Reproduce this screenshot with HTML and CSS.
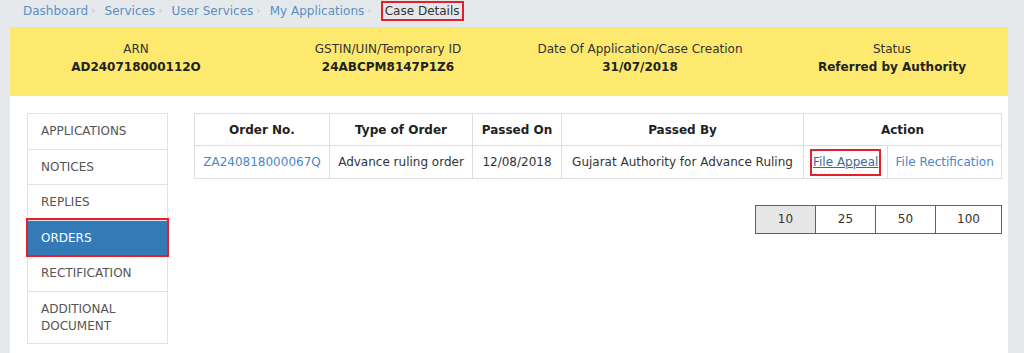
FILE: index.html
```html
<!DOCTYPE html>
<html lang="en">
<head>
  <meta charset="UTF-8" />
  <meta name="viewport" content="width=device-width, initial-scale=1.0" />
  <title>Case Details</title>
  <link rel="stylesheet" href="styles.css">
</head>
<body>
  <div class="page">
    <div class="crumbs">
      <a href="#">Dashboard</a><span class="sep">›</span>
      <a href="#">Services</a><span class="sep">›</span>
      <a href="#">User Services</a><span class="sep">›</span>
      <a href="#">My Applications</a><span class="sep">›</span>
      <span class="current">Case Details</span>
    </div>

    <div class="summary">
      <div class="field">
        <div class="label">ARN</div>
        <div class="value">AD240718000112O</div>
      </div>
      <div class="field">
        <div class="label">GSTIN/UIN/Temporary ID</div>
        <div class="value">24ABCPM8147P1Z6</div>
      </div>
      <div class="field">
        <div class="label">Date Of Application/Case Creation</div>
        <div class="value">31/07/2018</div>
      </div>
      <div class="field">
        <div class="label">Status</div>
        <div class="value">Referred by Authority</div>
      </div>
    </div>

    <div class="content">
      <ul class="side-nav">
        <li>APPLICATIONS</li>
        <li>NOTICES</li>
        <li>REPLIES</li>
        <li class="active">ORDERS</li>
        <li>RECTIFICATION</li>
        <li>ADDITIONAL DOCUMENT</li>
      </ul>

      <div class="main">
        <table class="orders">
          <thead>
            <tr>
              <th class="c-no">Order No.</th>
              <th class="c-type">Type of Order</th>
              <th class="c-date">Passed On</th>
              <th class="c-by">Passed By</th>
              <th colspan="2">Action</th>
            </tr>
          </thead>
          <tbody>
            <tr>
              <td><a href="#">ZA240818000067Q</a></td>
              <td>Advance ruling order</td>
              <td>12/08/2018</td>
              <td>Gujarat Authority for Advance Ruling</td>
              <td class="c-appeal"><a href="#" class="appeal">File Appeal</a></td>
              <td class="c-rect"><a href="#">File Rectification</a></td>
            </tr>
          </tbody>
        </table>

        <div class="pager">
          <span class="active">10</span>
          <span>25</span>
          <span>50</span>
          <span class="wide">100</span>
        </div>
      </div>
    </div>
  </div>
</body>
</html>
```

FILE: styles.css
```css
:root {
  --bg: #e6e9ec;
  --yellow: #fde96e;
  --link: #4a88c6;
  --line: #dddddd;
  --mark: #e3202c;
  --text: #333;
}

body {
  margin: 0;
  background: var(--bg);
  font-family: 'DejaVu Sans', Verdana, sans-serif;
  font-size: 12px;
  color: var(--text);
}

.page {
  margin-left: 10px;
  width: 998px;
}

/* breadcrumb */
.crumbs {
  height: 27px;
  padding-left: 13px;
  display: flex;
  align-items: flex-start;
  padding-top: 3px;
  box-sizing: border-box;
  line-height: 16px;
}

.crumbs a {
  color: #5b8ec2;
  text-decoration: none;
}

.crumbs .sep {
  color: #c4c8cc;
  margin: 0 9px 0 3px;
  font-size: 11px;
}

.crumbs .current {
  border: 2px solid var(--mark);
  padding: 0 2px;
  margin-top: -2px;
  color: #333;
}

/* yellow summary band */
.summary {
  background: var(--yellow);
  height: 69px;
  display: grid;
  grid-template-columns: repeat(4, 252px);
  overflow: hidden;
  padding-top: 13px;
  box-sizing: border-box;
}

.field {
  text-align: center;
  line-height: 18px;
}

.field .label {
  color: #333;
}

.field .value {
  font-weight: bold;
  color: #222;
}

/* white content area */
.content {
  background: #fff;
  display: flex;
  gap: 26px;
  padding: 17px 6px 10px 17px;
  min-height: 230px;
}

.side-nav {
  list-style: none;
  margin: 0;
  padding: 0;
  width: 139px;
  flex: none;
  align-self: flex-start;
  border: 1px solid #e2e2e2;
}

.side-nav li {
  padding: 9px 13px 8.5px;
  line-height: 17px;
  color: #555;
  border-top: 1px solid #e2e2e2;
}

.side-nav li:first-child {
  border-top: none;
}

.side-nav li.active {
  background: #337ab7;
  color: #fff;
  outline: 2px solid var(--mark);
  outline-offset: 0;
  position: relative;
}

.main {
  flex: 1;
}

/* orders table */
.orders {
  width: 100%;
  border-collapse: collapse;
}

.orders th,
.orders td {
  border: 1px solid var(--line);
  text-align: center;
  padding: 0 6px;
  white-space: nowrap;
}

.orders th {
  height: 31px;
  font-weight: bold;
  color: #222;
}

.orders td {
  height: 32px;
  color: var(--text);
}

.orders a {
  color: var(--link);
  text-decoration: none;
}

.c-no { width: 122px; }
.c-type { width: 130px; }
.c-date { width: 76px; }
.c-by { width: 229px; }
.c-appeal { width: 69px; }

.orders .appeal {
  display: inline-block;
  border: 2px solid var(--mark);
  padding: 4px 1px 5px;
  color: #3d6a99;
  text-decoration: underline;
}

/* page size selector */
.pager {
  margin-top: 26px;
  display: flex;
  justify-content: flex-end;
}

.pager span {
  width: 59px;
  height: 27px;
  line-height: 27px;
  text-align: center;
  border: 1px solid #5a6270;
  border-left: none;
  color: #333;
}

.pager span:first-child {
  border-left: 1px solid #5a6270;
}

.pager .active {
  background: #e6e6e6;
}

.pager .wide {
  width: 65px;
}
```
